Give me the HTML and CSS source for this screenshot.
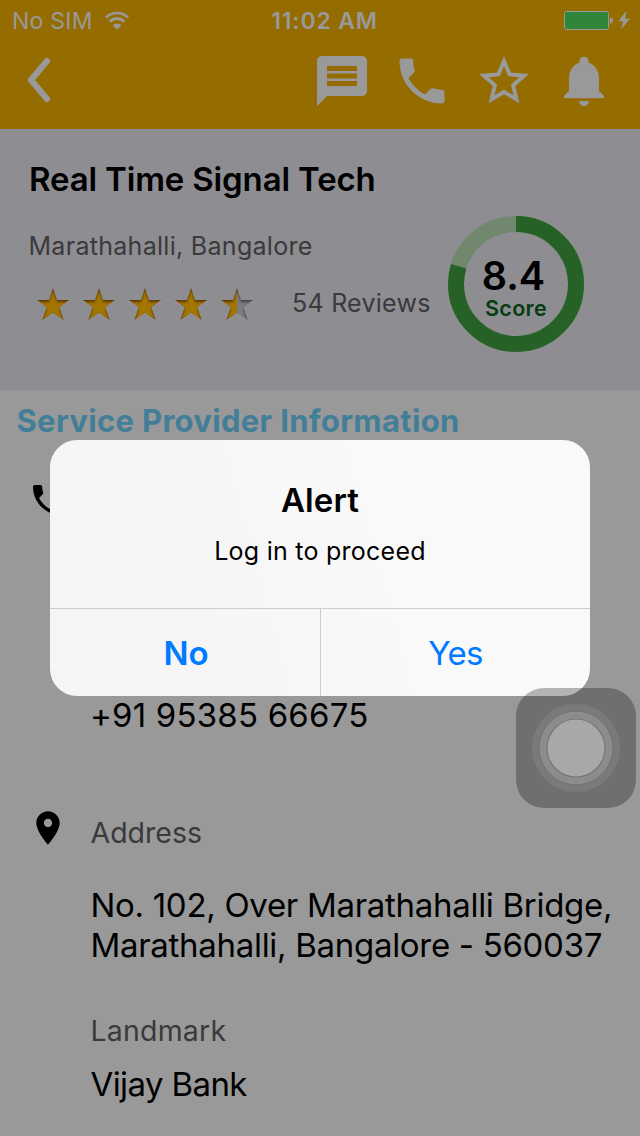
FILE: index.html
```html
<!DOCTYPE html>
<html lang="en">
<head>
<meta charset="utf-8">
<title>Real Time Signal Tech</title>
<link rel="stylesheet" href="styles.css">
</head>
<body>
<svg width="0" height="0" class="defs">
  <defs>
    <path id="star-shape" d="M16 0L19.8 12H32L22.2 19.3L26.6 32L16 24.5L5.4 32L9.8 19.3L0 12H12.2Z"/>
    <clipPath id="star-clip"><use href="#star-shape"/></clipPath>
    <clipPath id="left-half"><rect width="16" height="32"/></clipPath>
    <clipPath id="right-half"><rect x="16" width="16" height="32"/></clipPath>
    <filter id="soften"><feGaussianBlur stdDeviation=".9"/></filter>
    <symbol id="star" viewBox="0 0 32 32">
      <g clip-path="url(#star-clip)">
        <rect width="32" height="32" fill="#583206"/>
        <use href="#star-shape" y="2.2" fill="#a27605" stroke="#a27605" stroke-width=".8" filter="url(#soften)"/>
      </g>
    </symbol>
    <symbol id="star-grey" viewBox="0 0 32 32">
      <g clip-path="url(#star-clip)">
        <rect width="32" height="32" fill="#3c3d3f"/>
        <use href="#star-shape" y="2.2" fill="#7b7c7e" stroke="#7b7c7e" stroke-width=".8" filter="url(#soften)"/>
      </g>
    </symbol>
    <symbol id="call" viewBox="0 0 24 24">
      <path d="M6.62 10.79c1.44 2.83 3.76 5.14 6.59 6.59l2.2-2.2c.27-.27.67-.36 1.02-.24 1.12.37 2.33.57 3.57.57.55 0 1 .45 1 1V20c0 .55-.45 1-1 1-9.39 0-17-7.61-17-17 0-.55.45-1 1-1h3.5c.55 0 1 .45 1 1 0 1.25.2 2.45.57 3.57.11.35.03.74-.25 1.02l-2.2 2.2z"/>
    </symbol>
  </defs>
</svg>
<div class="screen">
  <header class="header">
    <div class="status">
      <div class="carrier"><span class="carrier-name">No SIM</span>
        <svg class="wifi" viewBox="0 0 24 18">
          <path d="M1 5.4a16 16 0 0 1 22 0M4.7 9.6a10.5 10.5 0 0 1 14.6 0" fill="none" stroke="#999" stroke-width="2.7"/>
          <path d="M7.5 13.2a6.5 6.5 0 0 1 9 0L12 17.8z" fill="#999"/>
        </svg>
      </div>
      <span class="clock">11:02 AM</span>
      <svg class="battery" viewBox="0 0 68 22">
        <rect x=".5" y="1.500" width="44" height="18" rx="2" fill="#2f863b" stroke="#999"/>
        <path d="M46 7.500q3 .5 3 3t-3 3z" fill="#999"/>
        <path d="M62.500.5L54.500 11.200h4.700L57 19.500L66 8.800h-4.800z" fill="#999"/>
      </svg>
    </div>
    <nav class="nav">
      <svg class="back" viewBox="0 0 24 46"><path d="M20 4L4 23L20 42" fill="none" stroke="#999" stroke-width="6.200" stroke-linecap="round" stroke-linejoin="round"/></svg>
      <div class="actions">
        <svg class="icon" viewBox="0 0 24 24"><path d="M20 2H4c-1.100 0-2 .9-2 2v18l4-4h14c1.100 0 2-.9 2-2V4c0-1.100-.9-2-2-2zm-2 12H6v-2h12v2zm0-3H6V9h12v2zm0-3H6V6h12v2z"/></svg>
        <svg class="icon icon-call"><use href="#call"/></svg>
        <svg class="icon" viewBox="0 0 24 24"><path d="M22 9.240l-7.190-.62L12 2 9.190 8.630 2 9.240l5.460 4.730L5.820 21 12 17.270 18.180 21l-1.630-7.030L22 9.240zM12 15.400l-3.760 2.270 1-4.280-3.320-2.880 4.380-.38L12 6.100l1.710 4.040 4.380.38-3.320 2.880 1 4.280L12 15.400z"/></svg>
        <svg class="icon" viewBox="0 0 24 24"><path d="M12 22c1.100 0 2-.9 2-2h-4c0 1.100.9 2 2 2zm6-6v-5c0-3.070-1.640-5.640-4.200-6.320V4c0-1-.8-1.700-1.800-1.700s-1.800.7-1.800 1.700v.68C7.630 5.360 6 7.920 6 11v5l-2 2v.9h16V18l-2-2z"/></svg>
      </div>
    </nav>
  </header>

  <section class="profile">
    <div class="summary">
      <h1 class="name">Real Time Signal Tech</h1>
      <p class="place">Marathahalli, Bangalore</p>
      <div class="rating">
        <div class="stars">
          <svg class="star"><use href="#star"/></svg>
          <svg class="star"><use href="#star"/></svg>
          <svg class="star"><use href="#star"/></svg>
          <svg class="star"><use href="#star"/></svg>
          <svg class="star" viewBox="0 0 32 32">
            <g clip-path="url(#right-half)"><use href="#star-grey"/></g>
            <g clip-path="url(#left-half)"><use href="#star"/></g>
          </svg>
        </div>
        <span class="reviews">54 Reviews</span>
      </div>
    </div>
    <div class="gauge">
      <svg class="ring" viewBox="0 0 136 136">
        <circle cx="68" cy="68" r="60" fill="none" stroke="#71886f" stroke-width="16"/>
        <circle cx="68" cy="68" r="60" fill="none" stroke="#266226" stroke-width="16" pathLength="100" stroke-dasharray="79.800 100" transform="rotate(-90 68 68)"/>
      </svg>
      <div class="score"><span class="score-value">8.4</span><span class="score-label">Score</span></div>
    </div>
  </section>

  <main class="info">
    <h2 class="section-title">Service Provider Information</h2>
    <div class="row row-phone">
      <svg class="row-icon"><use href="#call"/></svg>
      <p class="value phone">+91 95385 66675</p>
    </div>
    <div class="row row-address">
      <svg class="row-icon" viewBox="0 0 24 24"><path d="M12 2C8.130 2 5 5.130 5 9c0 5.250 7 13 7 13s7-7.750 7-13c0-3.870-3.130-7-7-7zm0 9.500c-1.380 0-2.500-1.120-2.500-2.500s1.120-2.500 2.500-2.500 2.500 1.120 2.500 2.500-1.120 2.500-2.500 2.500z"/></svg>
      <div class="details">
        <p class="label address-label">Address</p>
        <p class="value address">No. 102, Over Marathahalli Bridge,<br>Marathahalli, Bangalore - 560037</p>
        <p class="label landmark-label">Landmark</p>
        <p class="value landmark">Vijay Bank</p>
      </div>
    </div>
  </main>

  <div class="alert">
    <div class="alert-body">
      <h3 class="alert-title">Alert</h3>
      <p class="alert-text">Log in to proceed</p>
    </div>
    <div class="alert-buttons">
      <span class="button button-no">No</span>
      <span class="button button-yes">Yes</span>
    </div>
  </div>

  <div class="touch">
    <svg class="touch-rings" viewBox="0 0 120 120">
      <circle cx="60" cy="60" r="44" fill="#7a7a7a"/>
      <circle cx="60" cy="60" r="37" fill="#8c8c8c" stroke="#737373"/>
      <circle cx="60" cy="60" r="29" fill="#a8a8a8" stroke="#777" stroke-width="1.200"/>
    </svg>
  </div>
</div>
</body>
</html>
```
FILE: styles.css
```css
* { box-sizing: border-box; }
body { margin: 0; font-family: Inter, "Liberation Sans", sans-serif; color: #000; }
h1, h2, h3, p { margin: 0; font-weight: 400; }
.defs { position: absolute; }
.screen { position: relative; width: 640px; height: 1136px; overflow: hidden; background: #999; }

.header { height: 129px; background: #956c00; }
.status { display: grid; grid-template-columns: 1fr auto 1fr; align-items: center; height: 41px; padding: 0 8px 0 12px; color: #999; font-size: 23px; }
.carrier { display: flex; align-items: center; gap: 12px; }
.carrier-name { letter-spacing: .25px; }
.wifi { width: 24px; height: 18px; }
.clock { padding-left: 5px; font-weight: 600; letter-spacing: .8px; }
.battery { width: 68px; height: 22px; justify-self: end; }
.nav { display: flex; justify-content: space-between; align-items: flex-start; padding: 10px 26px 0 27px; }
.back { width: 24px; height: 46px; margin-top: 6px; }
.actions { display: flex; gap: 20px; }
.icon { width: 60px; height: 60px; fill: #999; }
.icon-call { margin-right: 2px; }

.profile { display: flex; justify-content: space-between; height: 261px; padding: 30px 56px 0 28px; background: #8e8d92; }
.name { padding-left: 1px; font-size: 33px; font-weight: 600; line-height: 40px; letter-spacing: -.15px; white-space: nowrap; }
.place { margin-top: 32px; padding-left: .5px; font-size: 25px; line-height: 30px; letter-spacing: .29px; color: #3a3a3b; }
.rating { display: flex; align-items: center; gap: 39.5px; height: 32px; margin-top: 27px; padding-left: 8.5px; }
.stars { display: flex; gap: 14px; }
.star { width: 32px; height: 32px; filter: drop-shadow(0 1px 0 #96959a); }
.reviews { margin-top: -2px; font-size: 25px; line-height: 30px; letter-spacing: .25px; color: #3a3a3b; white-space: nowrap; }
.gauge { display: grid; width: 136px; height: 136px; margin-top: 57px; }
.ring, .score { grid-area: 1 / 1; }
.score { display: flex; flex-direction: column; align-items: center; padding-top: 40px; }
.score-value { margin-right: 5px; font-size: 39.5px; font-weight: 600; line-height: 40px; }
.score-label { font-size: 21.5px; font-weight: 600; line-height: 24px; letter-spacing: .3px; color: #063c14; }

.info { padding-top: 11px; }
.section-title { padding-left: 16.5px; font-size: 31px; font-weight: 700; line-height: 40px; letter-spacing: .32px; color: #437e98; }
.row { display: flex; padding-left: 28px; }
.row-icon { flex: none; width: 40px; height: 40px; margin-right: 22px; }
.row-phone { height: 328px; padding-top: 39px; }
.phone { margin-top: 215px; letter-spacing: .2px; }
.row-address { padding-top: 39px; }
.value { font-size: 33px; line-height: 40px; white-space: nowrap; }
.label { font-size: 28.5px; line-height: 36px; color: #3a3a3a; }
.address-label { margin-top: 7px; padding-left: .5px; }
.address { margin-top: 34px; padding-left: .5px; letter-spacing: -.3px; }
.landmark-label { margin-top: 48px; padding-left: .5px; letter-spacing: .2px; }
.landmark { margin-top: 15px; padding-left: .5px; letter-spacing: -.6px; }

.alert { position: absolute; left: 50px; top: 440px; width: 540px; height: 256px; border-radius: 27px; background: linear-gradient(75deg, #f5f5f5, #f6f6f6 30%, #f9f9f9 60%); text-align: center; overflow: hidden; }
.alert-body { height: 168px; padding-top: 40px; }
.alert-title { font-size: 33px; font-weight: 600; line-height: 40px; letter-spacing: .1px; }
.alert-text { margin-top: 16px; font-size: 25px; line-height: 30px; letter-spacing: .25px; }
.alert-buttons { display: grid; grid-template-columns: 270px 270px; height: 88px; border-top: 1px solid #cdcdd0; color: #007aff; font-size: 33px; line-height: 88px; }
.button-no { padding-left: 2px; font-weight: 600; }
.button-yes { border-left: 1px solid #cdcdd0; letter-spacing: -.7px; }

.touch { position: absolute; left: 516px; top: 688px; width: 120px; height: 120px; border-radius: 28px; background: rgba(0, 0, 0, .275); }
.touch-rings { display: block; width: 120px; height: 120px; }
```
